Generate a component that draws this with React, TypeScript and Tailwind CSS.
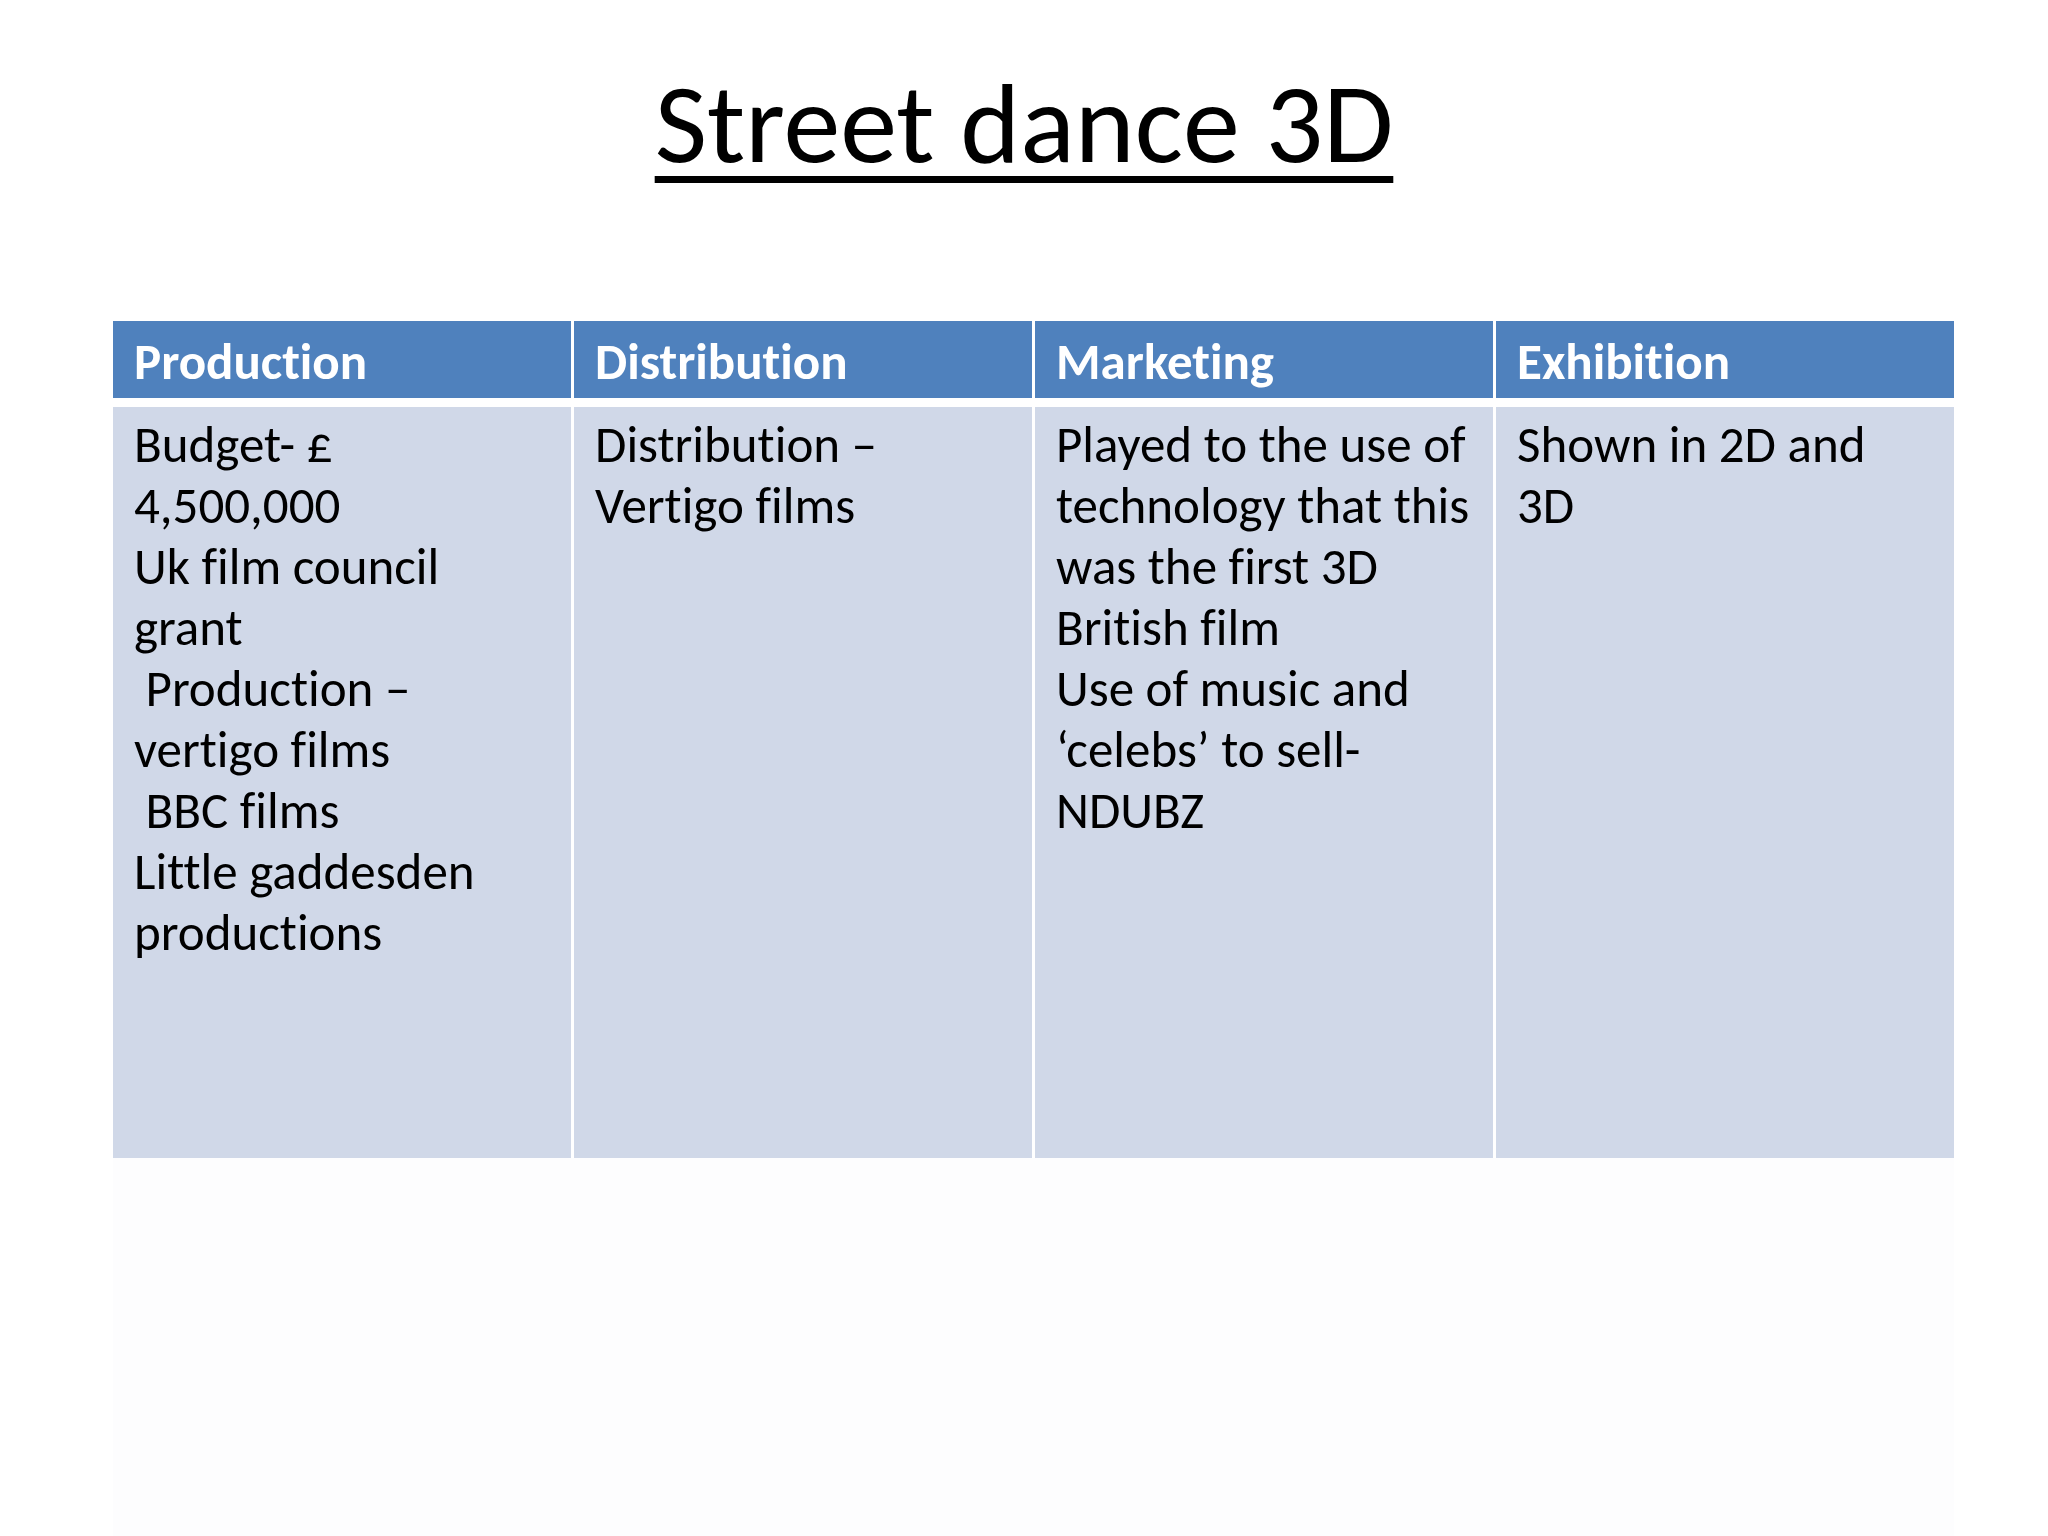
import React from "react";

const headers = ["Production", "Distribution", "Marketing", "Exhibition"];

const body: string[][] = [
  [
    "Budget- £",
    "4,500,000",
    "Uk film council",
    "grant",
    " Production –",
    "vertigo films",
    " BBC films",
    "Little gaddesden",
    "productions",
  ],
  ["Distribution –", "Vertigo films"],
  [
    "Played to the use of",
    "technology that this",
    "was the first 3D",
    "British film",
    "Use of music and",
    "‘celebs’ to sell-",
    "NDUBZ",
  ],
  ["Shown in 2D and", "3D"],
];

export default function App() {
  return (
    <div className="w-[2048px] h-[1536px] bg-white flex flex-col font-[Carlito,Calibri,Lato,sans-serif] [font-variant-ligatures:none] text-black">
      <div className="h-[321px] flex justify-center pt-[66px]">
        <h1 className="text-[114px] leading-[114px] font-normal underline decoration-[7px] underline-offset-[14px] whitespace-pre">
          Street dance 3D
        </h1>
      </div>
      <div className="ml-[113px] w-[1841px] flex flex-col">
        <div className="grid grid-cols-4 gap-x-[3px]">
          {headers.map((h) => (
            <div
              key={h}
              className="bg-[#4f81bd] h-[77px] pl-[21px] pt-[10px] text-white font-bold text-[51px] leading-[61px]"
            >
              {h}
            </div>
          ))}
        </div>
        <div className="h-[9px]" />
        <div className="grid grid-cols-4 gap-x-[3px]">
          {body.map((lines, i) => (
            <div
              key={i}
              className="bg-[#d0d8e8] h-[751px] pl-[21px] pt-[7px] text-[51px] leading-[61px]"
            >
              {lines.map((l, j) => (
                <div key={j} className="whitespace-pre">
                  {l}
                </div>
              ))}
            </div>
          ))}
        </div>
        <div className="h-[378px] bg-[#fdfdfe]" />
      </div>
    </div>
  );
}
